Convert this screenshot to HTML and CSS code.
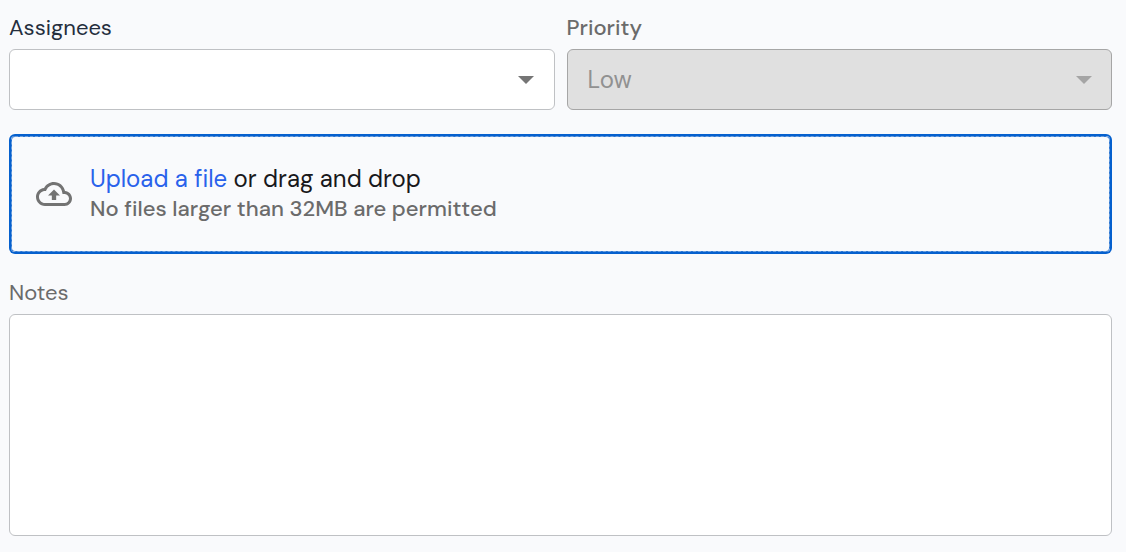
FILE: index.html
```html
<!DOCTYPE html>
<html lang="en">
<head>
<meta charset="utf-8">
<meta name="viewport" content="width=device-width, initial-scale=1">
<title>Task details</title>
<link rel="stylesheet" href="styles.css">
</head>
<body>
<form class="form">
  <div class="row">
    <div class="field">
      <label class="label label-dark" for="assignees">Assignees</label>
      <div class="select-wrap">
        <select class="control select" id="assignees"><option value=""></option></select>
        <svg class="arrow" viewBox="0 0 16 8" aria-hidden="true"><path d="M0 0h16L8 8z"/></svg>
      </div>
    </div>
    <div class="field">
      <label class="label label-medium" for="priority">Priority</label>
      <div class="select-wrap">
        <select class="control select" id="priority" disabled><option>Low</option></select>
        <svg class="arrow arrow-disabled" viewBox="0 0 16 8" aria-hidden="true"><path d="M0 0h16L8 8z"/></svg>
      </div>
    </div>
  </div>
  <div class="dropzone">
    <svg class="cloud" viewBox="0 0 24 24" aria-hidden="true"><path d="M19.35 10.04C18.67 6.59 15.64 4 12 4 9.11 4 6.6 5.64 5.35 8.04 2.34 8.36 0 10.91 0 14c0 3.31 2.69 6 6 6h13c2.76 0 5-2.24 5-5 0-2.64-2.05-4.78-4.65-4.96zM19 18H6c-2.21 0-4-1.79-4-4 0-2.05 1.53-3.76 3.56-3.97l1.07-.11.5-.95C8.08 7.14 9.94 6 12 6c2.62 0 4.88 1.86 5.39 4.43l.3 1.5 1.53.11c1.56.1 2.78 1.41 2.78 2.96 0 1.65-1.35 3-3 3zM8 13h2.55v3h2.9v-3H16l-4-4z"/></svg>
    <div class="drop-text">
      <p class="prompt"><button class="upload" type="button">Upload a file</button> or drag and drop</p>
      <p class="hint">No files larger than 32MB are permitted</p>
    </div>
  </div>
  <div class="field">
    <label class="label" for="notes">Notes</label>
    <textarea class="control notes" id="notes"></textarea>
  </div>
</form>
</body>
</html>
```
FILE: styles.css
```css
* { box-sizing: border-box; }
body {
  margin: 0;
  background: #f9fafc;
  color: #18181b;
  font-family: "DM Sans", Inter, sans-serif;
  font-optical-sizing: none;
  font-variant-ligatures: none;
}
.form {
  display: flex;
  flex-direction: column;
  gap: 24px;
  padding: 13px 14px 16px 9px;
}
.row {
  display: grid;
  grid-template-columns: 1fr 1fr;
  gap: 12px;
}
.field {
  display: flex;
  flex-direction: column;
  gap: 6px;
}
.label {
  color: #6b6b6b;
  font-size: 22px;
  line-height: 30px;
}
.label-dark { color: #242e3d; }
.label-medium { font-weight: 500; }
.control {
  display: block;
  width: 100%;
  border: 1px solid #bfc1c4;
  border-radius: 6px;
  background: #fff;
  color: #18181b;
  font: inherit;
  font-optical-sizing: none;
  font-size: 24px;
}
.select-wrap { position: relative; }
.select {
  height: 61px;
  padding: 0 48px 0 20px;
  appearance: none;
}
.select:disabled {
  border-color: #a6a6a6;
  background: #e0e0e0;
  color: #919191;
  opacity: 1;
}
.arrow {
  position: absolute;
  top: 27px;
  right: 21px;
  width: 16px;
  height: 8px;
  fill: #757575;
  pointer-events: none;
}
.arrow-disabled {
  right: 20px;
  fill: #a5a5a5;
}
.dropzone {
  display: flex;
  align-items: center;
  gap: 16px;
  min-height: 116px;
  margin: 2px;
  padding: 0 24px;
  border: 1px dashed #6d9fdc;
  border-radius: 4px;
  background: linear-gradient(#f9fafc, #f9fafc) padding-box, linear-gradient(#2b76d5, #2b76d5) border-box;
  box-shadow: 0 0 0 2px #0560ce;
}
.cloud {
  flex: none;
  width: 36px;
  height: 36px;
  fill: #737373;
}
.drop-text { margin-left: 2px; }
.prompt, .hint {
  margin: 0;
  line-height: 30px;
}
.prompt { font-size: 24px; }
.hint {
  color: #6b6b6b;
  font-size: 22px;
  font-weight: 500;
}
.upload {
  padding: 0;
  border: 0;
  background: none;
  color: #2962eb;
  font: inherit;
  font-optical-sizing: none;
  font-variant-ligatures: none;
  cursor: pointer;
}
.notes {
  height: 222px;
  padding: 16px 20px;
  resize: none;
}
```
